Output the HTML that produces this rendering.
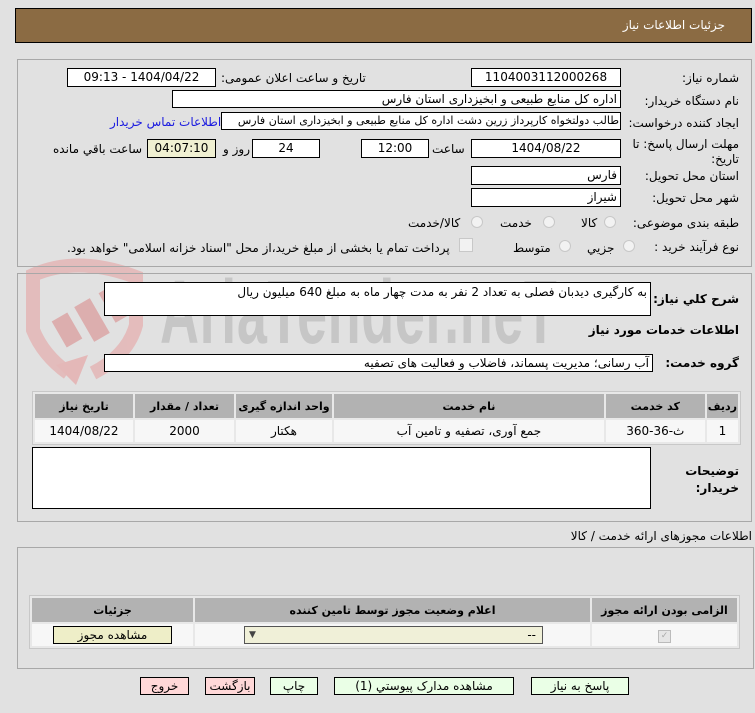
<!DOCTYPE html>
<html><head><meta charset="utf-8"><style>
body{margin:0;width:755px;height:713px;background:#e1e1e1;font-family:Tahoma,"DejaVu Sans","Liberation Sans",sans-serif;font-size:12px;color:#000;position:relative;overflow:hidden}
.a{position:absolute;white-space:nowrap}
.box{position:absolute;border:1px solid #a8a8a8;}
.in{position:absolute;background:#fff;border:1px solid #000;box-sizing:border-box;font-size:12px;line-height:16px;direction:rtl;padding:0 3px;white-space:nowrap;overflow:hidden}
.c{text-align:center}
.l{direction:rtl;text-align:right}
.rad{position:absolute;width:12px;height:12px;border-radius:50%;border:1px solid #c8c8c8;background:#f2f2f2;box-sizing:border-box}
table{border-collapse:separate;border-spacing:2px;position:absolute;background:#e8e8e8;border:1px solid #c8c8c8}
th{background:#b2b2b2;font-weight:bold;height:22px;font-size:11px}
td{background:#f7f7f7;height:20px;text-align:center}
.btn{position:absolute;border:1px solid #000;box-sizing:border-box;height:18px;text-align:center;line-height:16px;font-size:12px}
</style></head><body>
<div class="a" style="left:15px;top:8px;width:737px;height:35px;background:#8b6b43;border:1px solid #000;box-sizing:border-box"></div>
<div class="a" style="right:30px;top:18px;color:#fff;font-size:12px">جزئیات اطلاعات نیاز</div>

<!-- watermark -->
<svg class="a" style="left:18px;top:255px" width="130" height="135" viewBox="0 0 130 135"><g fill="none" stroke="#e4b8b8" stroke-width="14" opacity="0.9"><path d="M15 40 L15 20 Q60 0 118 22 L118 70 Q110 100 75 118"/><path d="M15 40 L15 75 Q25 100 50 118"/></g><path d="M38 110 L58 130 L70 100 Z" fill="#e4b8b8"/><g fill="#dcaeae"><rect x="40" y="60" width="18" height="30" transform="rotate(-30 49 75)"/><rect x="65" y="45" width="18" height="40" transform="rotate(-30 74 65)"/><rect x="88" y="32" width="16" height="34" transform="rotate(-30 96 49)"/></g></svg>
<div class="a" style="left:160px;top:262px;font-family:'Liberation Sans',sans-serif;font-size:90px;font-weight:bold;color:#c6c6c6;letter-spacing:1px;transform:scaleX(0.6);transform-origin:left top">AriaTender.neT</div>

<!-- section 1 -->
<div class="box" style="left:17px;top:59px;width:733px;height:206px"></div>
<div class="a l" style="right:16px;top:71px">شماره نیاز:</div>
<div class="in c" style="left:471px;top:68px;width:150px;height:19px">1104003112000268</div>
<div class="a l" style="left:221px;top:71px">تاریخ و ساعت اعلان عمومی:</div>
<div class="in c" style="left:67px;top:68px;width:149px;height:19px">1404/04/22 - 09:13</div>
<div class="a l" style="right:16px;top:94px">نام دستگاه خریدار:</div>
<div class="in" style="left:172px;top:90px;width:449px;height:18px">اداره کل منابع طبیعی و ابخیزداری استان فارس</div>
<div class="a l" style="right:16px;top:116px">ایجاد کننده درخواست:</div>
<div class="in" style="left:221px;top:112px;width:400px;height:18px;font-size:11px;padding:0 1px">طالب دولتخواه کارپرداز زرین دشت اداره کل منابع طبیعی و ابخیزداری استان فارس</div>
<div class="a" style="left:110px;top:115px;color:#1a1ae0">اطلاعات تماس خریدار</div>
<div class="a l" style="right:16px;top:137px;line-height:15px;text-align:right">مهلت ارسال پاسخ: تا<br>تاریخ:</div>
<div class="in c" style="left:471px;top:139px;width:150px;height:19px">1404/08/22</div>
<div class="a" style="left:432px;top:142px">ساعت</div>
<div class="in c" style="left:361px;top:139px;width:68px;height:19px">12:00</div>
<div class="in c" style="left:252px;top:139px;width:68px;height:19px">24</div>
<div class="a" style="left:223px;top:142px">روز و</div>
<div class="in c" style="left:147px;top:139px;width:69px;height:19px;background:#f0f0d2">04:07:10</div>
<div class="a" style="left:53px;top:142px">ساعت باقي مانده</div>
<div class="a l" style="right:16px;top:169px">استان محل تحویل:</div>
<div class="in" style="left:471px;top:166px;width:150px;height:19px">فارس</div>
<div class="a l" style="right:16px;top:191px">شهر محل تحویل:</div>
<div class="in" style="left:471px;top:188px;width:150px;height:19px">شیراز</div>
<div class="a l" style="right:16px;top:216px">طبقه بندی موضوعی:</div>
<div class="rad" style="left:604px;top:216px"></div><div class="a" style="left:581px;top:216px">کالا</div>
<div class="rad" style="left:543px;top:216px"></div><div class="a" style="left:500px;top:216px">خدمت</div>
<div class="rad" style="left:471px;top:216px"></div><div class="a" style="left:408px;top:216px">کالا/خدمت</div>
<div class="a l" style="right:16px;top:240px">نوع فرآیند خرید :</div>
<div class="rad" style="left:623px;top:240px"></div><div class="a" style="left:587px;top:241px">جزیي</div>
<div class="rad" style="left:559px;top:240px"></div><div class="a" style="left:513px;top:241px">متوسط</div>
<div class="a" style="left:459px;top:238px;width:12px;height:12px;border:1px solid #c8c8c8;background:#f2f2f2"></div>
<div class="a" style="left:67px;top:241px;direction:rtl">پرداخت تمام یا بخشی از مبلغ خرید،از محل "اسناد خزانه اسلامی" خواهد بود.</div>

<!-- section 2 -->
<div class="box" style="left:17px;top:273px;width:733px;height:247px"></div>
<div class="a l" style="right:16px;top:292px;font-weight:bold">شرح کلي نیاز:</div>
<div class="in" style="left:104px;top:282px;width:547px;height:34px;padding-top:1px">به کارگیری دیدبان فصلی به تعداد 2 نفر به مدت چهار ماه به مبلغ 640 میلیون ریال</div>
<div class="a l" style="right:16px;top:323px;font-weight:bold">اطلاعات خدمات مورد نياز</div>
<div class="a l" style="right:16px;top:356px;font-weight:bold">گروه خدمت:</div>
<div class="in" style="left:104px;top:354px;width:549px;height:18px">آب رسانی؛ مدیریت پسماند، فاضلاب و فعالیت های تصفیه</div>
<table style="left:32px;top:391px;width:709px;direction:rtl">
<tr><th style="width:29px">ردیف</th><th style="width:97px">کد خدمت</th><th>نام خدمت</th><th style="width:94px">واحد اندازه گیری</th><th style="width:97px">تعداد / مقدار</th><th style="width:96px">تاریخ نیاز</th></tr>
<tr><td>1</td><td>ث-36-360</td><td>جمع آوری، تصفیه و تامین آب</td><td>هکتار</td><td>2000</td><td>1404/08/22</td></tr>
</table>
<div class="in" style="left:32px;top:447px;width:619px;height:62px"></div>
<div class="a l" style="right:16px;top:463px;font-weight:bold;line-height:17px;text-align:right">توضیحات<br>خریدار:</div>

<!-- section 3 -->
<div class="a l" style="right:3px;top:529px">اطلاعات مجوزهای ارائه خدمت / کالا</div>
<div class="box" style="left:17px;top:547px;width:735px;height:120px"></div>
<table style="left:29px;top:595px;width:711px;direction:rtl">
<tr><th style="width:143px">الزامی بودن ارائه مجوز</th><th>اعلام وضعیت مجوز توسط تامین کننده</th><th style="width:159px">جزئیات</th></tr>
<tr><td><span style="display:inline-block;width:11px;height:11px;border:1px solid #bbb;background:#e6e6e6;color:#aaa;font-size:9px;line-height:11px">✓</span></td><td><div style="margin:0 auto 0 48px;width:299px;height:18px;border:1px solid #555;background:#f0f0d8;box-sizing:border-box;position:relative;text-align:right;line-height:16px;padding-right:6px">--<span style="position:absolute;left:4px;top:0;font-size:9px;color:#444">▼</span></div></td><td><div style="margin:0 auto;width:119px;height:18px;border:1px solid #000;background:#eeeec8;box-sizing:border-box;line-height:16px">مشاهده مجوز</div></td></tr>
</table>

<div class="btn" style="left:531px;top:677px;width:98px;background:#eaffe6">پاسخ به نیاز</div>
<div class="btn" style="left:334px;top:677px;width:180px;background:#eaffe6">مشاهده مدارک پیوستي (1)</div>
<div class="btn" style="left:270px;top:677px;width:48px;background:#eaffe6">چاپ</div>
<div class="btn" style="left:205px;top:677px;width:50px;background:#ffd8d8">بازگشت</div>
<div class="btn" style="left:140px;top:677px;width:49px;background:#ffd8d8">خروج</div>
</body></html>
